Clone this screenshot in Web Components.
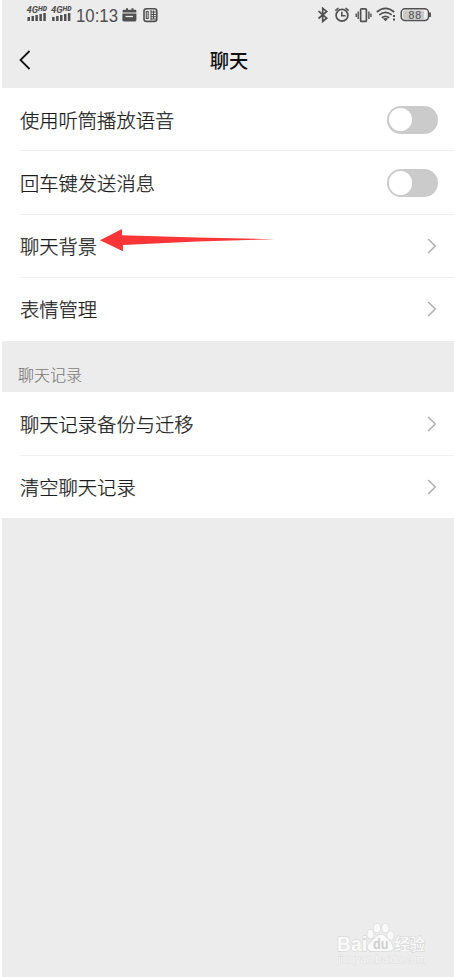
<!DOCTYPE html>
<html lang="zh-CN">
<head>
<meta charset="utf-8">
<title>聊天</title>
<style>
html,body{margin:0;height:100%;background:#fff}
body{font-family:"Noto Sans CJK SC",sans-serif;overflow:hidden}
</style>
</head>
<body>
<settings-screen>
  <status-bar slot="top"></status-bar>
  <nav-bar slot="top">聊天</nav-bar>
  <setting-group>
    <setting-row kind="switch">使用听筒播放语音</setting-row>
    <setting-row kind="switch">回车键发送消息</setting-row>
    <setting-row>聊天背景</setting-row>
    <setting-row>表情管理</setting-row>
  </setting-group>
  <group-title>聊天记录</group-title>
  <setting-group style="--h:126px;--rows:64px 62px">
    <setting-row>聊天记录备份与迁移</setting-row>
    <setting-row>清空聊天记录</setting-row>
  </setting-group>
  <pointer-arrow slot="overlay"></pointer-arrow>
  <brand-mark slot="overlay"></brand-mark>
</settings-screen>
<script>
function define(name, html){
  customElements.define(name, class extends HTMLElement{
    constructor(){
      super();
      const t=document.createElement('template');
      t.innerHTML=html;
      this.attachShadow({mode:'open'}).append(t.content.cloneNode(true));
    }
  });
}
define('settings-screen',`
<style>:host{display:flex;flex-direction:column;position:relative;box-sizing:border-box;height:977px;width:452px;margin-left:2px;background:#ececec}</style>
<slot name="top"></slot><slot></slot><slot name="overlay"></slot>`);

const signal=`
  <text x="26.500" y="12.500" font-size="9" font-weight="700" font-style="italic" textLength="11.500" lengthAdjust="spacingAndGlyphs">4G</text>
  <text x="38" y="11.200" font-size="6.800" font-weight="900" font-style="italic" textLength="9" lengthAdjust="spacingAndGlyphs">HD</text>
  <path d="M27.500 17h2.500v4h-2.500zM31.500 16h2.500v5h-2.500zM35.400 15h2.500v6h-2.500zM39.400 14h2.500v7h-2.500zM43.300 13h2.500v8h-2.500z"/>`;

define('status-bar',`
<style>
:host{display:flex;height:32px;color:#4a4a4a;font-family:Roboto,sans-serif}
svg{display:block;width:452px;height:32px}
</style>
<svg viewBox="2 0 452 32" fill="none" stroke="#505050">
  <g fill="#505050" stroke="none">
    <g>${signal}</g>
    <g transform="translate(24.600 0)">${signal}</g>
    <text x="76" y="21.800" font-size="17.500" font-family="Liberation Sans,sans-serif" textLength="42" lengthAdjust="spacingAndGlyphs">10:13</text>
    <path d="M124 9.800h2v-1.600h2v1.600h3.500v-1.600h2v1.600h1.700a1.200 1.200 0 0 1 1.200 1.200v1.500h-13.800v-1.500a1.200 1.200 0 0 1 1.200-1.200zM122.400 13.500h14v6.600a1.400 1.400 0 0 1-1.400 1.400h-11.200a1.400 1.400 0 0 1-1.400-1.400z"/>
  </g>
  <path d="M125.500 16.500h7.500" stroke="#ececec" stroke-width="1.300"/>
  <rect x="144" y="8.800" width="12.800" height="12.600" rx="2.500" stroke-width="1.600"/>
  <path d="M146.300 11.500h1.900v7h-1.900zM151 10v10M150.500 12h5.500M150.500 14.500h5.500M150.500 16.800h5.500M150.500 19h5.500M153.500 10.500v9" stroke-width="1.100"/>
  <path d="M318.500 11.200l8.200 7-4 3.300V8.200l4 3.300-8.200 7" stroke-width="1.700"/>
  <circle cx="342" cy="15.300" r="5.900" stroke-width="1.700"/>
  <path d="M341.800 11.800v4h3.800M335.300 10.700l3.200-2.700M348.700 10.700l-3.200-2.700" stroke-width="1.600"/>
  <rect x="360.600" y="8.800" width="5.800" height="12.600" rx="1" stroke-width="1.700"/>
  <path d="M358.200 11.500v7.500M368.900 11.500v7.500M356.200 13.500v3.500M370.900 13.500v3.500" stroke-width="1.400"/>
  <path d="M376.800 12q8.700-7.200 17.400 0M379.300 14.900q6.200-5 12.400 0M381.800 17.700q3.700-2.700 7.400 0" stroke-width="1.700"/>
  <path d="M382.800 18.600q2.700-1.400 5.400 0l-2.700 2.600z" fill="#505050" stroke="none"/>
  <path d="M393 16h2M393 19.500h2" stroke-width="1.900"/>
  <rect x="401.200" y="8.800" width="27.300" height="11.800" rx="3.800" stroke-width="1.500"/>
  <rect x="403" y="10.500" width="21" height="8.400" rx="1.500" fill="#c9c9c9" stroke="none"/>
  <path d="M430 12.500v4.500" stroke-width="1.900"/>
  <text x="408.500" y="18.600" font-family="Liberation Sans,sans-serif" font-size="10.500" fill="#505050" stroke="none" textLength="12.500">88</text>
</svg>`);

define('nav-bar',`
<style>
:host{display:grid;grid-template-columns:60px 1fr 60px;align-items:center;height:56px;font-size:19.300px;font-weight:500;color:#111;text-align:center}
svg{width:14px;height:22px;margin-left:16px;display:block}
span{line-height:56px;padding-left:2px}
</style>
<svg viewBox="0 0 14 22" fill="none" stroke="#151515" stroke-width="1.800"><path d="M11.500 2L2.500 11l9 9"/></svg><span><slot></slot></span>`);

define('setting-group',`
<style>:host{display:grid;grid-template-rows:var(--rows,none);grid-auto-rows:1fr;height:var(--h,253px);background:#fff}</style><slot></slot>`);

define('group-title',`
<style>:host{display:block;box-sizing:border-box;height:51px;padding:21px 0 0 16px;font-size:16px;line-height:24px;font-weight:300;color:#7c7c7c;-webkit-text-stroke:.15px #7c7c7c}</style><slot></slot>`);

class SettingRow extends HTMLElement{
  connectedCallback(){
    const end=this.getAttribute('kind')==='switch'
      ?'<i></i>'
      :'<svg viewBox="0 0 10 16" fill="none" stroke="#b2b2b2" stroke-width="1.700"><path d="M1.200 1l7 7-7 7"/></svg>';
    this.attachShadow({mode:'open'}).innerHTML=`
<style>
:host{display:flex;align-items:center;justify-content:space-between;box-sizing:border-box;margin-left:18px;padding-top:1px;border-bottom:1px solid #f0f0f0;font-size:19.300px;line-height:28px;font-weight:300;color:#1c1c1c}
:host(:last-child){border-color:transparent}
i{width:51.500px;height:28px;border-radius:14px;background:#cbcbcb;margin-right:16px;display:flex;align-items:center;box-sizing:border-box;padding-left:2px}
i::before{content:"";width:23.500px;height:23.500px;border-radius:50%;background:#fff}
svg{width:10px;height:16px;margin-right:17.500px}
span{white-space:nowrap;-webkit-text-stroke:.25px #1c1c1c}
</style><span><slot></slot></span>${end}`;
  }
}
customElements.define('setting-row',SettingRow);

define('pointer-arrow',`
<style>:host{position:absolute;left:98px;top:228px}svg{display:block}</style>
<svg width="176" height="24" viewBox="100 228 176 24"><path d="M100 240.300L122 229v6.200l75 2.300 77.500 1.700-77.500 2.200-74 3.500v6.300z" fill="#fc3537"/></svg>`);

define('brand-mark',`
<style>:host{position:absolute;left:332px;top:920px}svg{display:block}</style>
<svg width="100" height="50" viewBox="334 920 100 50" fill="#f9f9f9" stroke="#dadada" stroke-width="1.400" paint-order="stroke" font-family="Liberation Sans,sans-serif">
  <text x="337" y="950.500" font-size="20" font-weight="700" textLength="30" lengthAdjust="spacingAndGlyphs">Bai</text>
  <ellipse cx="370.500" cy="934" rx="3.200" ry="4.300"/><ellipse cx="377" cy="928" rx="3.200" ry="4.600"/><ellipse cx="385.500" cy="928" rx="3.200" ry="4.600"/><ellipse cx="390.500" cy="935.500" rx="3.200" ry="4.200"/>
  <path d="M381 934.500c4 0 6 4 9 7s5 9.500-1 9.500h-17c-6 0-5-6.500-1-9.500s6-7 10-7z"/>
  <text x="373" y="949" font-size="14" font-weight="700" fill="#d0d0d0" stroke="none" textLength="15.500" lengthAdjust="spacingAndGlyphs">du</text>
  <text x="394.500" y="949.500" font-size="15.500" font-weight="500" font-family="Noto Sans CJK SC" textLength="30.500">经验</text>
  <text x="338" y="962.500" font-size="11" fill="#f6f6f6" stroke="#dfdfdf" stroke-width="1" textLength="88">jingyan.baidu.com</text>
</svg>`);
</script>
</body>
</html>
